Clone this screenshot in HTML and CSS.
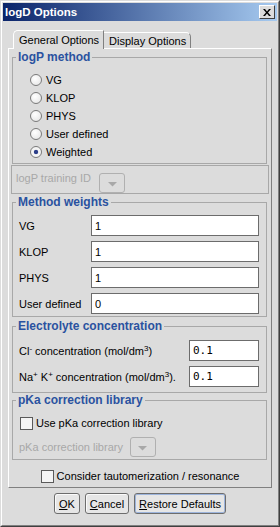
FILE: index.html
```
<!DOCTYPE html>
<html>
<head>
    <meta charset="UTF-8">
    <title>logD Options</title>
    <link rel="stylesheet" href="styles.css">
</head>
<body>
    <div class="window">
        <div class="frame">
            <div class="titlebar">
                <span class="title">logD Options</span>
                <span class="close">
                    <svg width="8" height="7" viewBox="0 0 8 7"><path d="M0 0h2l2 2.4 2-2.4h2l-3 3.5 3 3.5h-2l-2-2.4-2 2.4h-2l3-3.5z" fill="#000"/></svg>
                </span>
            </div>

            <div class="client">
                <!-- Tabs -->
                <div class="tabs">
                    <div class="tab selected">General Options</div>
                    <div class="tab">Display Options</div>
                </div>

                <div class="panel">
                    <fieldset class="group first">
                        <legend>logP method</legend>
                        <div class="radios">
                            <label class="radio"><input type="radio" name="logp"> VG</label>
                            <label class="radio"><input type="radio" name="logp"> KLOP</label>
                            <label class="radio"><input type="radio" name="logp"> PHYS</label>
                            <label class="radio"><input type="radio" name="logp"> User defined</label>
                            <label class="radio"><input type="radio" name="logp" checked> Weighted</label>
                        </div>
                    </fieldset>

                    <div class="training">
                        <span class="disabled-label">logP training ID</span>
                        <span class="combo"><svg width="9" height="5" viewBox="0 0 9 5"><path d="M0 0h9l-4.5 4.5z" fill="#a8a8a8"/></svg></span>
                    </div>

                    <fieldset class="group weights-group">
                        <legend>Method weights</legend>
                        <div class="weights">
                            <span>VG</span><input class="field" type="text" value="1">
                            <span>KLOP</span><input class="field" type="text" value="1">
                            <span>PHYS</span><input class="field" type="text" value="1">
                            <span>User defined</span><input class="field" type="text" value="0">
                        </div>
                    </fieldset>

                    <fieldset class="group electro-group">
                        <legend>Electrolyte concentration</legend>
                        <div class="electro">
                            <span>Cl<sup>-</sup> concentration (mol/dm<sup>3</sup>)</span><input class="field mono" type="text" value="0.1">
                            <span>Na<sup>+</sup> K<sup>+</sup> concentration (mol/dm<sup>3</sup>).</span><input class="field mono" type="text" value="0.1">
                        </div>
                    </fieldset>

                    <fieldset class="group pka-group">
                        <legend>pKa correction library</legend>
                        <div class="pka">
                            <label class="check"><input type="checkbox"> Use pKa correction library</label>
                            <div class="lib-row">
                                <span class="disabled-label">pKa correction library</span>
                                <span class="combo"><svg width="9" height="5" viewBox="0 0 9 5"><path d="M0 0h9l-4.5 4.5z" fill="#a8a8a8"/></svg></span>
                            </div>
                        </div>
                    </fieldset>

                    <label class="check taut"><input type="checkbox"> Consider tautomerization / resonance</label>
                </div>

                <div class="buttons">
                    <button><u>O</u>K</button>
                    <button><u>C</u>ancel</button>
                    <button class="default"><u>R</u>estore Defaults</button>
                </div>
            </div>
        </div>
    </div>
</body>
</html>
```
FILE: styles.css
```
* { box-sizing: border-box; margin: 0; padding: 0; }
body {
    font-family: "Liberation Sans", Arial, sans-serif;
    font-size: 11px;
    color: #000;
    background-color: #dcdcdc;
}
.window {
    width: 280px;
    height: 527px;
    border: 1px solid;
    border-color: #dcdcdc #404040 #404040 #dcdcdc;
}
.frame {
    height: 100%;
    border: 1px solid;
    border-color: #fff #808080 #808080 #fff;
    padding: 1px;
}

/* Title bar */
.titlebar {
    height: 18px;
    background: linear-gradient(to right, #0a246a, #a6caf0);
    display: flex;
    align-items: center;
    justify-content: space-between;
    padding: 0 2px;
}
.title { color: #fff; font-weight: bold; font-size: 11.5px; }
.close {
    width: 16px;
    height: 14px;
    background-color: #dcdcdc;
    border: 1px solid;
    border-color: #fff #404040 #404040 #fff;
    display: flex;
    align-items: center;
    justify-content: center;
}

/* Tabs */
.client { padding: 9px 5px 0; }
.tabs {
    display: flex;
    align-items: flex-end;
    height: 18px;
    padding-left: 5px;
}
.tab {
    height: 16px;
    line-height: 14px;
    padding: 1px 4px 0 5px;
    border-top: 1px solid #fff;
    border-right: 1px solid #808080;
    border-top-right-radius: 5px;
}
.tab.selected {
    position: relative;
    z-index: 1;
    height: 19px;
    margin-bottom: -1px;
    padding-top: 2px;
    background-color: #dcdcdc;
    border-left: 1px solid #fff;
    border-top-right-radius: 0;
    border-top-left-radius: 5px;
}
.panel {
    height: 440px;
    border: 1px solid;
    border-color: #fff #808080 #808080 #fff;
}

/* Group boxes */
.group {
    border: 1px solid #a8a8a8;
    margin: 0 4px 0 3px;
    padding: 0;
    min-width: 0;
}
.group.first { margin-top: 1px; }
.weights-group { margin-top: 1px; }
.electro-group { margin-top: 2px; }
legend {
    font-size: 12px;
    font-weight: bold;
    color: #2a52a0;
    line-height: 14px;
    padding: 0 2px;
    margin-left: 3px;
}

.radios { padding: 7px 0 2px 17px; }
.radio { display: flex; align-items: center; gap: 4px; height: 18px; }
input[type=radio] {
    appearance: none;
    width: 12px;
    height: 12px;
    border: 1px solid #7a7a7a;
    border-radius: 50%;
    background: radial-gradient(circle at 40% 35%, #fff, #e2e2e2);
}
input[type=radio]:checked {
    background: radial-gradient(circle, #2d3f8a 0 1.8px, #f4f4f4 2.6px);
}
input[type=checkbox] {
    appearance: none;
    width: 13px;
    height: 13px;
    border: 1px solid #5a5a5a;
    background-color: #f4f4f4;
}

.disabled-label { color: #a8a8a8; }
.combo {
    width: 26px;
    height: 20px;
    border: 1px solid #b0b0b0;
    border-radius: 3px;
    display: flex;
    align-items: center;
    justify-content: center;
    padding-top: 2px;
}

.training {
    height: 29px;
    margin: 1px 2px 0;
    border: 1px solid #a8a8a8;
    display: flex;
    align-items: flex-start;
    padding: 7px 0 0 4px;
}
.training .disabled-label { margin-top: -1px; }
.training .combo { margin-left: 8px; }

/* Text fields */
.field {
    height: 21px;
    border: 1px solid #6c6c6c;
    background-color: #fff;
    padding: 0 3px;
    font-family: "Liberation Sans", Arial, sans-serif;
    font-size: 11px;
    width: 100%;
}
.field.mono { font-family: "DejaVu Sans Mono", monospace; font-size: 11px; }

.weights {
    display: grid;
    grid-template-columns: 72px 1fr;
    row-gap: 5px;
    align-items: center;
    padding: 6px 7px 2px 6px;
}
.electro {
    display: grid;
    grid-template-columns: 1fr 70px;
    row-gap: 5px;
    align-items: center;
    padding: 7px 7px 5px 6px;
}
sup { font-size: 8px; line-height: 0; vertical-align: 4px; }

.pka { padding: 8px 0 2px 7px; }
.check { display: flex; align-items: center; gap: 3px; height: 16px; }
.lib-row {
    display: flex;
    align-items: center;
    height: 20px;
    margin-top: 6px;
    margin-left: -1px;
}
.lib-row .combo { margin-left: 7px; }
.taut { justify-content: center; margin-top: 8px; }

/* Buttons */
.buttons {
    display: flex;
    justify-content: center;
    gap: 5px;
    margin-top: 5px;
}
button {
    height: 21px;
    padding: 0 4px;
    border: 1px solid #6d6d6d;
    border-radius: 3px;
    background-color: #e6e6e6;
    box-shadow: inset 1px 1px #fafafa;
    font-family: "Liberation Sans", Arial, sans-serif;
    font-size: 11px;
    color: #000;
}
button.default { box-shadow: inset 0 0 0 1px #9cb4dc; }
```
